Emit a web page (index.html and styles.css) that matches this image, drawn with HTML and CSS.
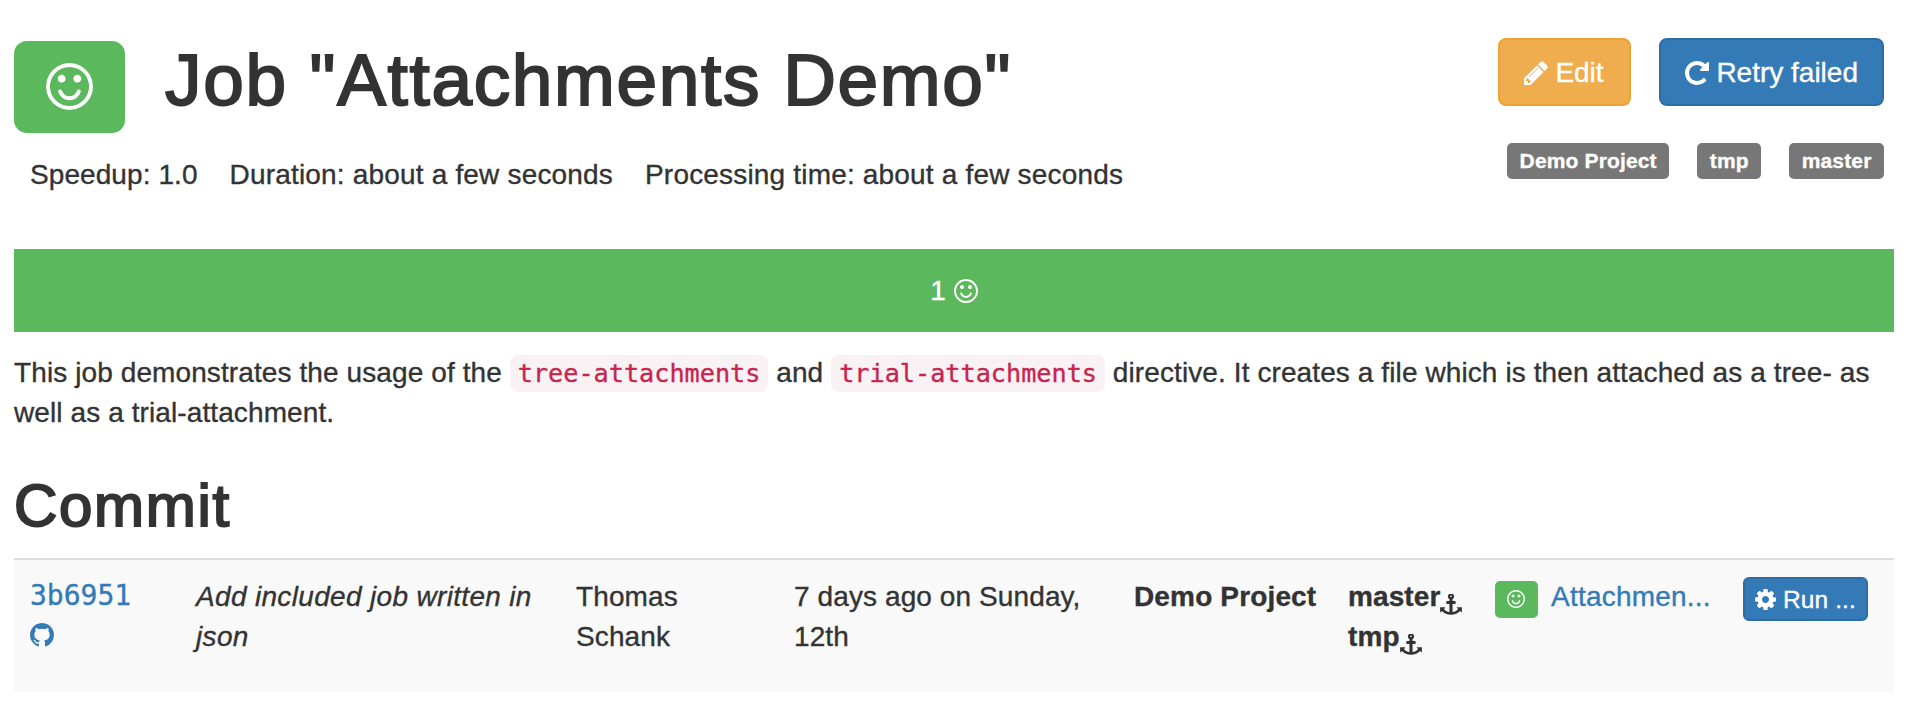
FILE: index.html
```html
<!DOCTYPE html>
<html lang="en">
<head>
<meta charset="utf-8">
<title>Job "Attachments Demo"</title>
<link rel="stylesheet" href="styles.css">
</head>
<body>
<svg class="sprite" aria-hidden="true">
  <symbol id="smile" viewBox="128 128 1536 1536"><path d="M1262 1075q-37 121-138 195t-228 74-228-74-138-195q-8-25 4-48.500t38-31.500q25-8 48.500 4t31.500 38q25 80 92.500 129.500t151.500 49.500 151.500-49.500 92.500-129.500q8-26 32-38t49-4 37 31.500 4 48.500zm-494-435q0 53-37.500 90.500t-90.500 37.500-90.500-37.500-37.500-90.500 37.500-90.500 90.500-37.500 90.500 37.500 37.500 90.500zm512 0q0 53-37.500 90.500t-90.500 37.500-90.500-37.500-37.500-90.500 37.500-90.500 90.500-37.500 90.500 37.500 37.500 90.500zm256 256q0-130-51-248.500t-136.500-204-204-136.500-248.500-51-248.500 51-204 136.500-136.500 204-51 248.500 51 248.500 136.500 204 204 136.500 248.500 51 248.500-51 204-136.500 136.500-204 51-248.500zm128 0q0 209-103 385.500t-279.500 279.500-385.500 103-385.500-103-279.500-279.500-103-385.500 103-385.500 279.500-279.500 385.500-103 385.500 103 279.500 279.500 103 385.500z"/></symbol>
  <symbol id="pencil" viewBox="128 128 1536 1536"><path d="M491 1536l91-91-235-235-91 91v107h128v128h107zm523-928q0-22-22-22-10 0-17 7l-542 542q-7 7-7 17 0 22 22 22 10 0 17-7l542-542q7-7 7-17zm-54-192l416 416-832 832h-416v-416zm683 96q0 53-37 90l-166 166-416-416 166-165q36-38 90-38 53 0 91 38l235 234q37 39 37 91z"/></symbol>
  <symbol id="repeat" viewBox="128 128 1536 1536"><path d="M1664 256v448q0 26-19 45t-45 19h-448q-42 0-59-40-17-39 14-69l138-138q-148-137-349-137-104 0-198.500 40.500t-163.500 109.500-109.500 163.500-40.500 198.500 40.500 198.500 109.500 163.500 163.500 109.500 198.500 40.500q119 0 225-52t179-147q7-10 23-12 15 0 25 9l137 138q9 8 9.500 20.500t-7.500 22.500q-109 132-264 204.500t-327 72.500q-156 0-298-61t-245-164-164-245-61-298 61-298 164-245 245-164 298-61q147 0 284.500 55.500t244.500 156.500l130-129q29-31 70-14 39 17 39 59z"/></symbol>
  <symbol id="cog" viewBox="128 128 1536 1536"><path d="M1152 896q0-106-75-181t-181-75-181 75-75 181 75 181 181 75 181-75 75-181zm512-109v222q0 12-8 23t-20 13l-185 28q-19 54-39 91 35 50 107 138 10 12 10 25t-9 23q-27 37-99 108t-94 71q-12 0-26-9l-138-108q-44 23-91 38-16 136-29 186-7 28-36 28h-222q-14 0-24.500-8.500t-11.500-21.500l-28-184q-49-16-90-37l-141 107q-10 9-25 9-14 0-25-11-126-114-165-168-7-10-7-23 0-12 8-23 15-21 51-66.500t54-70.500q-27-50-41-99l-183-27q-13-2-21-12.500t-8-23.500v-222q0-12 8-23t19-13l186-28q14-46 39-92-40-57-107-138-10-12-10-24 0-10 9-23 26-36 98.500-107.500t94.500-71.500q13 0 26 10l138 107q44-23 91-38 16-136 29-186 7-28 36-28h222q14 0 24.500 8.500t11.500 21.500l28 184q49 16 90 37l142-107q9-9 24-9 13 0 25 10 129 119 165 170 7 8 7 22 0 12-8 23-15 21-51 66.500t-54 70.500q26 50 41 98l183 28q13 2 21 12.500t8 23.500z"/></symbol>
  <symbol id="github" viewBox="128 128 1536 1536"><path d="M896 128q209 0 385.500 103t279.500 279.500 103 385.500q0 251-146.500 451.500t-378.500 277.500q-27 5-40-7t-13-30q0-3 .5-76.500t.5-134.500q0-97-52-142 57-6 102.500-18t94-39 81-66.500 53-105 20.500-150.500q0-119-79-206 37-91-8-204-28-9-81 11t-92 44l-38 24q-93-26-192-26t-192 26q-16-11-42.500-27t-83.500-38.500-85-13.500q-45 113-8 204-79 87-79 206 0 85 20.500 150t52.500 105 80.500 67 94 39 102.500 18q-39 36-49 103-21 10-45 15t-57 5-65.500-21.500-55.500-62.500q-19-32-48.500-52t-49.500-24l-20-3q-21 0-29 4.500t-5 11.500 9 14 13 12l7 5q22 10 43.500 38t31.500 51l10 23q13 38 44 61.500t67 30 69.500 7 55.500-3.500l23-4q0 38 .5 88.500t.5 54.500q0 18-13 30t-40 7q-232-77-378.500-277.500t-146.500-451.500q0-209 103-385.500t279.500-279.500 385.500-103z"/></symbol>
  <symbol id="anchor" viewBox="0 64 1792 1728"><path d="M960 256q0-26-19-45t-45-19-45 19-19 45 19 45 45 19 45-19 19-45zm832 928v352q0 22-20 30-8 2-12 2-12 0-23-9l-93-93q-119 143-318.500 226.500t-429.500 83.500-429.500-83.500-318.500-226.500l-93 93q-9 9-23 9-4 0-12-2-20-8-20-30v-352q0-14 9-23t23-9h352q22 0 30 20 8 19-7 35l-100 100q67 91 189.500 153.500t271.500 82.500v-647h-192q-26 0-45-19t-19-45v-128q0-26 19-45t45-19h192v-163q-58-34-93-92.500t-35-128.500q0-106 75-181t181-75 181 75 75 181q0 70-35 128.500t-93 92.500v163h192q26 0 45 19t19 45v128q0 26-19 45t-45 19h-192v647q149-20 271.500-82.500t189.500-153.500l-100-100q-15-16-7-35 8-20 30-20h352q14 0 23 9t9 23z"/></symbol>
</svg>

<main class="page">
  <header class="job-header">
    <div class="job-main">
      <div class="job-title">
        <span class="state-badge"><svg class="icon"><use href="#smile"/></svg></span>
        <h1>Job "Attachments Demo"</h1>
      </div>
      <ul class="job-meta">
        <li>Speedup: 1.0</li>
        <li>Duration: about a few seconds</li>
        <li>Processing time: about a few seconds</li>
      </ul>
    </div>
    <div class="job-side">
      <div class="actions">
        <a class="btn btn-warning"><svg class="icon"><use href="#pencil"/></svg><span>Edit</span></a>
        <a class="btn btn-primary"><svg class="icon"><use href="#repeat"/></svg><span>Retry failed</span></a>
      </div>
      <div class="labels">
        <span class="label">Demo Project</span>
        <span class="label">tmp</span>
        <span class="label">master</span>
      </div>
    </div>
  </header>

  <div class="progress"><span>1</span><svg class="icon"><use href="#smile"/></svg></div>

  <p class="description">This job demonstrates the usage of the <code>tree-attachments</code> and <code>trial-attachments</code> directive. It creates a file which is then attached as a tree- as well as a trial-attachment.</p>

  <h2>Commit</h2>
  <div class="commit-row">
    <div class="commit-id"><a class="hash">3b6951</a><a class="github"><svg class="icon"><use href="#github"/></svg></a></div>
    <div class="commit-subject">Add included job written in json</div>
    <div class="commit-author">Thomas Schank</div>
    <div class="commit-date">7 days ago on Sunday, 12th</div>
    <div class="commit-project">Demo Project</div>
    <div class="commit-branches">
      <div>master<svg class="icon anchor"><use href="#anchor"/></svg></div>
      <div>tmp<svg class="icon anchor"><use href="#anchor"/></svg></div>
    </div>
    <div class="commit-job"><span class="state-badge small"><svg class="icon"><use href="#smile"/></svg></span><a>Attachmen...</a></div>
    <div class="commit-run"><a class="btn btn-primary btn-sm"><svg class="icon"><use href="#cog"/></svg><span>Run ...</span></a></div>
  </div>
</main>
</body>
</html>
```
FILE: styles.css
```css
* { box-sizing: border-box; }

body {
  margin: 0;
  background: #fff;
  color: #333;
  font-family: "Liberation Sans", Arial, sans-serif;
  font-size: 28px;
  line-height: 40px;
  letter-spacing: 0.1px;
  -webkit-text-stroke: 0.35px currentColor;
}

.sprite { display: none; }

.icon {
  display: block;
  flex: none;
  width: 24px;
  height: 24px;
  fill: currentColor;
}

.page { padding: 38px 12px 0 14px; }

a { color: #337ab7; text-decoration: none; }

h1, h2 {
  margin: 0;
  font-weight: 400;
  -webkit-text-stroke: 2px #333;
}

/* Header */
.job-header {
  display: flex;
  justify-content: space-between;
  height: 211px;
}

.job-main { padding-top: 2px; }

.job-title { display: flex; gap: 40px; }

h1 {
  font-size: 73px;
  line-height: 79px;
  letter-spacing: 1.66px;
}

.state-badge {
  display: flex;
  align-items: center;
  justify-content: center;
  flex: none;
  width: 111px;
  height: 92px;
  margin-top: 1px;
  padding: 0 1px 1px 0;
  border-radius: 13px;
  background: #5cb85c;
  color: #fff;
}

.state-badge .icon { width: 47px; height: 47px; }

.job-meta {
  display: flex;
  gap: 32px;
  margin: 22px 0 0;
  padding: 0 0 0 16px;
  list-style: none;
  letter-spacing: 0.18px;
}

.job-meta li:first-child { letter-spacing: 0.08px; }

.job-side {
  display: flex;
  flex-direction: column;
  align-items: flex-end;
  gap: 37px;
  padding-right: 10px;
}

.actions, .labels { display: flex; gap: 28px; }

.btn {
  display: flex;
  align-items: center;
  gap: 7px;
  height: 68px;
  padding: 2px 24px 0;
  border: 2px solid;
  border-radius: 8px;
  color: #fff;
  letter-spacing: 0;
  white-space: nowrap;
}

.btn .icon { margin-top: -1px; }

.btn-warning { min-width: 133px; background: #f0ad4e; border-color: #eea236; }
.btn-primary { background: #337ab7; border-color: #2e6da4; }

.label {
  height: 36px;
  padding: 0 12.5px;
  border-radius: 5px;
  background: #777;
  color: #fff;
  font-size: 21px;
  font-weight: 700;
  line-height: 35px;
  letter-spacing: 0.15px;
}

/* Result bar */
.progress {
  display: flex;
  align-items: center;
  justify-content: center;
  gap: 8px;
  height: 83px;
  background: #5cb85c;
  color: #fff;
}

.description { margin: 21px 0 0; }

code {
  padding: 4px 8px;
  border-radius: 8px;
  background: #f9f2f4;
  color: #c7254e;
  font-family: "DejaVu Sans Mono", monospace;
  font-size: 25.2px;
  line-height: 1;
  letter-spacing: 0;
}

h2 {
  margin: 40px 0 19px;
  font-size: 60px;
  line-height: 66px;
  letter-spacing: 1.7px;
}

/* Commit table row */
.commit-row {
  display: grid;
  grid-template-columns: 166px 380px 218px 340px 214px 147px 248px 1fr;
  height: 134px;
  border-top: 2px solid #ddd;
  background: #f9f9f9;
}

.commit-row > div { padding: 17px 16px 0; }
.commit-row > .commit-id, .commit-row > .commit-run { padding-top: 16px; }

.hash, .github { display: block; }

.hash {
  font-family: "DejaVu Sans Mono", monospace;
  letter-spacing: 0;
}

.github { padding-top: 7px; }

.commit-subject { font-style: italic; letter-spacing: 0.33px; }
.commit-row > .commit-author { padding-right: 80px; }
.commit-project, .commit-branches { font-weight: 700; white-space: nowrap; }
.commit-project { letter-spacing: 0.15px; }

.commit-branches > div { display: flex; }

.icon.anchor { width: 22px; height: 21px; margin-top: 17px; }

.commit-job { display: flex; gap: 13px; letter-spacing: 0.22px; }

.state-badge.small {
  width: 43px;
  height: 37px;
  margin-top: 4px;
  border-radius: 5px;
}

.state-badge.small .icon { width: 18px; height: 18px; }

.btn-sm {
  width: 125px;
  height: 44px;
  margin-top: 1px;
  padding: 2px 10px 0;
  border-radius: 6px;
  font-size: 24.5px;
  letter-spacing: 0.1px;
}

.btn-sm .icon { width: 21px; height: 21px; }
```
